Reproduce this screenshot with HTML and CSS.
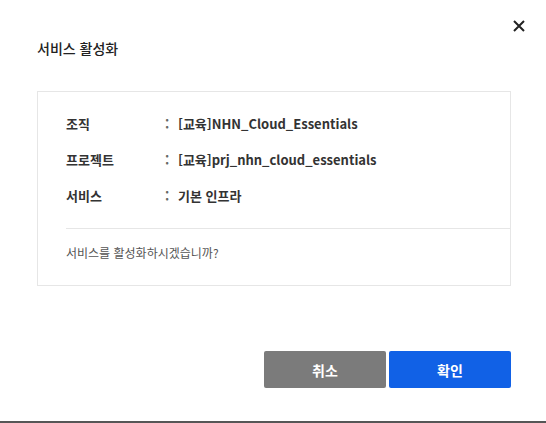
FILE: index.html
```html
<!DOCTYPE html>
<html lang="ko">
<head>
<meta charset="utf-8">
<title>서비스 활성화</title>
<link rel="stylesheet" href="styles.css">
</head>
<body>
<div class="dialog">
  <button class="close" aria-label="닫기">
    <svg width="12" height="12" viewBox="0 0 12 12"><path d="M1 1L11 11M11 1L1 11" stroke="#222" stroke-width="2" fill="none"/></svg>
  </button>
  <h2 class="title">서비스 활성화</h2>
  <div class="panel">
    <dl class="info">
      <div class="row"><dt>조직</dt><dd><span class="colon">:</span>[교육]NHN_Cloud_Essentials</dd></div>
      <div class="row"><dt>프로젝트</dt><dd><span class="colon">:</span>[교육]prj_nhn_cloud_essentials</dd></div>
      <div class="row"><dt>서비스</dt><dd><span class="colon">:</span>기본 인프라</dd></div>
    </dl>
    <p class="message">서비스를 활성화하시겠습니까?</p>
  </div>
  <div class="actions">
    <button class="btn btn-cancel">취소</button>
    <button class="btn btn-ok">확인</button>
  </div>
</div>
</body>
</html>
```
FILE: styles.css
```css
html, body {
  margin: 0;
  padding: 0;
}
body {
  background: #565656;
  font-family: "Noto Sans CJK KR", "Noto Sans", sans-serif;
  color: #222;
}
.dialog {
  position: relative;
  height: 421px;
  background: #fff;
  padding: 0 35px 0 37px;
  box-sizing: border-box;
}
.close {
  position: absolute;
  top: 20px;
  right: 21px;
  width: 12px;
  height: 12px;
  padding: 0;
  border: 0;
  background: none;
  display: flex;
}
.title {
  margin: 0;
  padding-top: 38px;
  font-size: 14px;
  line-height: 20px;
  font-weight: 500;
  color: #222;
}
.panel {
  margin-top: 33px;
  border: 1px solid #e6e6e6;
  padding-left: 28px;
}
.info {
  margin: 0;
  padding: 22px 0 22px;
  border-bottom: 1px solid #e6e6e6;
}
.row {
  display: flex;
  height: 36px;
  align-items: flex-start;
}
.row:last-child {
  height: 20px;
}
.row dt, .row dd {
  margin: 0;
  font-size: 13px;
  line-height: 20px;
  font-weight: 700;
  color: #333;
}
.row dt {
  width: 99px;
}
.colon {
  display: inline-block;
  width: 13px;
  font-weight: 700;
  color: #666;
}
.message {
  margin: 0;
  padding: 15px 0 23px;
  font-size: 12px;
  line-height: 18px;
  color: #555;
}
.actions {
  display: flex;
  justify-content: flex-end;
  gap: 3px;
  margin-top: 65px;
}
.btn {
  width: 122px;
  height: 37px;
  border: 0;
  border-radius: 2px;
  color: #fff;
  font-family: inherit;
  font-size: 14px;
  font-weight: 700;
  padding: 0;
}
.btn-cancel {
  background: #7b7b7b;
}
.btn-ok {
  background: #1161e6;
}
```
